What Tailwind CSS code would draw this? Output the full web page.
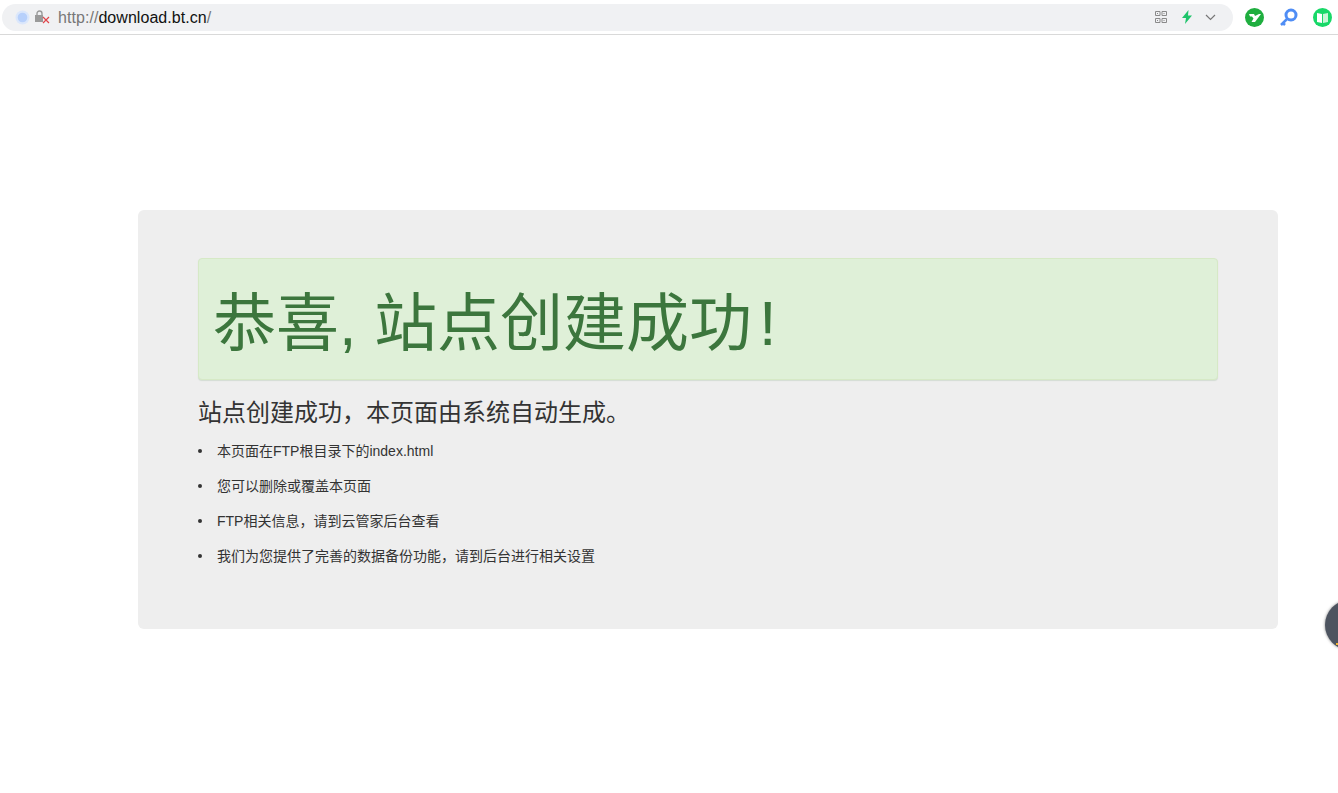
<!DOCTYPE html>
<html lang="zh-CN">
<head>
  <meta charset="UTF-8" />
  <title>恭喜，站点创建成功！</title>
  <script src="https://cdn.jsdelivr.net/npm/@tailwindcss/browser@4"></script>
</head>
<body class="bg-white h-[793px] overflow-hidden relative font-['Liberation_Sans','Noto_Sans_CJK_SC',sans-serif] text-[#333]">
  <!-- browser bar -->
  <div class="h-[35px] border-b border-[#d9d9d9] flex items-center">
    <div class="ml-[2px] w-[1231px] h-[27px] rounded-full bg-[#f0f1f3] flex items-center">
      <svg class="ml-[13px] w-[15px] h-[15px]" viewBox="0 0 15 15">
        <circle cx="7.500" cy="7.500" r="7" fill="#dbe7fb" />
        <circle cx="7.500" cy="7.500" r="4.800" fill="#b7d0fb" />
      </svg>
      <svg class="ml-[4px] w-[16px] h-[14px]" viewBox="0 0 16 14">
        <path d="M3 5V3.500a2.500 2.500 0 0 1 5 0V5" fill="none" stroke="#9a9a9a" stroke-width="1.400" />
        <rect x="1" y="5" width="8" height="7" fill="#9a9a9a" />
        <path d="M9 7l6 6M15 7l-6 6" stroke="#e0454a" stroke-width="1.200" />
      </svg>
      <div class="ml-[8px] pt-px text-[16px] tracking-[0.05px] text-[#777]">http://<span class="text-[#111]">download.bt.cn</span>/</div>
      <div class="ml-auto flex items-center mr-[17px]">
        <svg class="w-[12px] h-[12px]" viewBox="0 0 12 12" fill="none" stroke="#8a8a8a">
          <path d="M.5.500h4.500v4h-4.500zM7 .5h4.500v4H7zM.5 7.500h4.500v4h-4.500zM7 7.500h4.500v4H7z" />
          <path d="M2.500 2v1M9 2v1M2.500 9v1M9 9v1" />
        </svg>
        <svg class="ml-[14px] w-[12px] h-[14px]" viewBox="0 0 12 14">
          <path d="M7.500 0 1 8h4l-1 6 7-8.500H7z" fill="#1fc46b" />
        </svg>
        <svg class="ml-[12px] w-[11px] h-[7px]" viewBox="0 0 11 7" fill="none" stroke="#777" stroke-width="1.200">
          <path d="M1 1l4.500 4.500L10 1" />
        </svg>
      </div>
    </div>
    <svg class="ml-[12px] w-[19px] h-[19px]" viewBox="0 0 19 19">
      <circle cx="9.500" cy="9.500" r="9.500" fill="#1fae3f" />
      <path d="M4 6h5l1 2 4-2h2l-6 8H6.500l2-3.500L7 8.500H5z" fill="#fff" />
    </svg>
    <svg class="ml-[15px] w-[19px] h-[19px]" viewBox="0 0 19 19" fill="none" stroke="#4f8df5">
      <circle cx="12" cy="7" r="5" stroke-width="3" />
      <path d="M8 11l-6 6M4 15l2 2" stroke-width="2.500" />
    </svg>
    <svg class="ml-[15px] w-[19px] h-[19px]" viewBox="0 0 19 19">
      <circle cx="9.500" cy="9.500" r="9.500" fill="#18d868" />
      <path d="M4 5l5 1v9l-5-1z" fill="#fff" />
      <path d="M15 5l-5 1v9l5-1z" fill="#c9f6d8" />
    </svg>
  </div>

  <!-- page -->
  <div class="mt-[175px] ml-[138px] w-[1140px] h-[419px] bg-[#eee] rounded-md pt-[48px] px-[60px]">
    <div class="h-[122px] bg-[#dff0d8] border border-[#d6e9c6] rounded shadow-[0_1px_1px_rgba(60,118,61,0.15)] pl-[14px] pt-[30px]">
      <h1 class="text-[63px] leading-[1.1] text-[#3c763d] font-normal whitespace-pre">恭喜, 站点创建成功<span class="ml-[7px]">!</span></h1>
    </div>
    <p class="mt-[17px] text-[24px] leading-[32px] font-normal">站点创建成功，本页面由系统自动生成。</p>
    <ul class="mt-[12px] text-[14px] leading-[20px]">
      <li class="mb-[15px] flex items-center"><span class="w-1 h-1 rounded-full bg-[#333] mr-[15px]"></span>本页面在FTP根目录下的index.html</li>
      <li class="mb-[15px] flex items-center"><span class="w-1 h-1 rounded-full bg-[#333] mr-[15px]"></span>您可以删除或覆盖本页面</li>
      <li class="mb-[15px] flex items-center"><span class="w-1 h-1 rounded-full bg-[#333] mr-[15px]"></span>FTP相关信息，请到云管家后台查看</li>
      <li class="flex items-center"><span class="w-1 h-1 rounded-full bg-[#333] mr-[15px]"></span>我们为您提供了完善的数据备份功能，请到后台进行相关设置</li>
    </ul>
  </div>

  <!-- floating ball cut by the window edge -->
  <div class="absolute left-[1325px] top-[600px] w-[50px] h-[50px] rounded-full bg-[#4d5460] shadow-[0_0_3px_rgba(0,0,0,0.5)]">
    <div class="absolute left-[11px] top-[43px] w-[3px] h-[2px] bg-[#f2b632]"></div>
  </div>
</body>
</html>
